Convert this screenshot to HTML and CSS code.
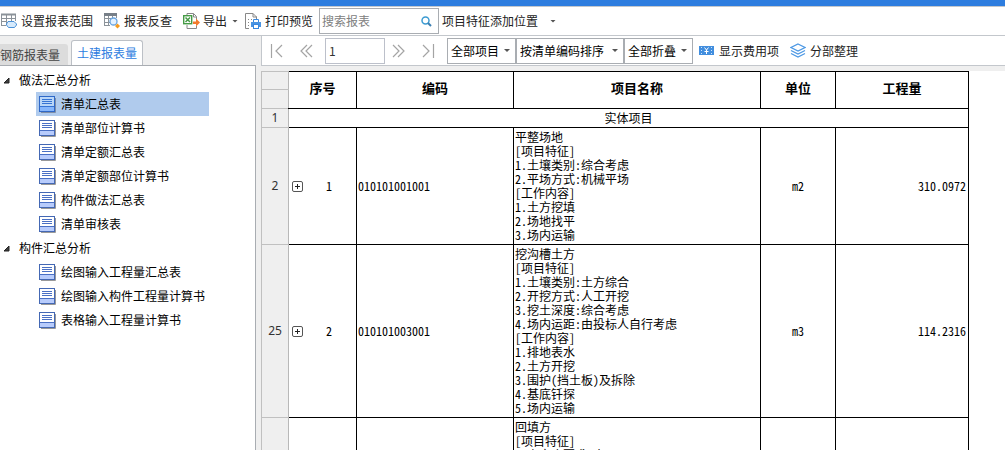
FILE: index.html
```html
<!DOCTYPE html>
<html lang="zh-CN">
<head>
<meta charset="utf-8">
<title>报表</title>
<link rel="stylesheet" href="styles.css">
</head>
<body>
<svg class="defs" aria-hidden="true">
  <symbol id="doc" viewBox="0 0 17 17">
    <path d="M2 16.5H16.5V2" fill="none" stroke="#999"/>
    <rect x=".5" y=".5" width="15" height="15" fill="#fff" stroke="#4468b4"/>
    <rect x="1" y="11" width="14" height="4" fill="#b8ccfc"/>
    <path d="M1 10.5H15M3 3.5H13M3 5.5H13M3 7.5H13" stroke="#4a70c4"/>
  </symbol>
  <symbol id="doc-on" viewBox="0 0 17 17">
    <path d="M2 16.5H16.5V2" fill="none" stroke="#7f8ea6"/>
    <rect x=".5" y=".5" width="15" height="15" fill="#b9d6f8" stroke="#2e68c8"/>
    <rect x="1" y="11" width="14" height="4" fill="#86b6fb"/>
    <path d="M1 10.5H15M3 3.5H13M3 5.5H13M3 7.5H13" stroke="#3674d4"/>
  </symbol>
</svg>
<div class="app">
  <header class="title-strip"></header>
  <div class="toolbar">
    <button class="tool tool-range" type="button">
      <svg class="icon" viewBox="0 0 17 16"><path d="M1.500 1V12M6.500 1V12M11.500 1V8M15.500 1V8M1 5.500H16M1 8.500H7M1 12.500H6" fill="none" stroke="#8b9299"/><path d="M1 1.500H16" stroke="#8b9299" stroke-width="2"/><path d="M8 8.500H14L16.500 11V12L14.500 14.500H8.500L6.500 12V11Z" fill="#d6eafc" stroke="#4b91d8"/></svg>
      设置报表范围</button>
    <button class="tool tool-check" type="button">
      <svg class="icon" viewBox="0 0 17 16"><path d="M.5 1V13M4.500 1V13M8.500 1V5M12.500 1V5M0 5.500H7M0 9.500H6M0 12.500H6" fill="none" stroke="#8b9299"/><path d="M0 1.500H13" stroke="#777f88" stroke-width="3"/><circle cx="9.500" cy="8.500" r="3.500" fill="#e3f1ff" stroke="#6aa5e0" stroke-width="1.300"/><path d="M13.500 10.500L16 13L13.500 15.500L11 13Z" fill="#f49b20"/></svg>
      报表反查</button>
    <button class="tool tool-export" type="button">
      <svg class="icon" viewBox="0 0 17 16"><path d="M4 2V.5H10.500L13.500 3.500V7M10.500.5V4H13.500M4 12V15.500H13.500V13" fill="none" stroke="#888"/><rect x=".7" y="2.700" width="8" height="8" fill="#fff" stroke="#459b45" stroke-width="1.400"/><path d="M2.500 4.500L7 9M7 4.500L2.500 9" stroke="#459b45" stroke-width="1.500"/><path d="M10 8.500H13V5.500L17 9.500L13 13.500V11H10Z" fill="#f37a2c"/></svg>
      导出<span class="arrow"></span></button>
    <button class="tool tool-print" type="button">
      <svg class="icon" viewBox="0 0 17 16"><path d="M4 15.500H.5V.5H8L11.500 4V6M8 .5V4H12" fill="none" stroke="#888"/><path d="M3 6.500H4M3 9.500H4M3 12.500H4M6 6.500H7" stroke="#888"/><path d="M8.500 9V6.500H13.500V9" fill="#fff" stroke="#3988df"/><path d="M6 9H16V14H14V12H8V14H6Z" fill="#4a94e2"/><rect x="8.500" y="11.500" width="5" height="4" fill="#fff" stroke="#3988df"/></svg>
      打印预览</button>
    <label class="search"><input type="text" placeholder="搜索报表" aria-label="搜索报表">
      <svg class="search-icon" viewBox="0 0 11 11"><circle cx="4.500" cy="4.500" r="3.500" fill="none" stroke="#3c9bd2" stroke-width="1.500"/><path d="M7 7L10 10" stroke="#3c7fb2" stroke-width="2"/></svg>
    </label>
    <button class="tool tool-position" type="button">项目特征添加位置<span class="arrow"></span></button>
  </div>
  <div class="body">
    <aside class="sidebar">
      <nav class="tabs">
        <button class="tab" type="button">钢筋报表量</button>
        <button class="tab tab-on" type="button">土建报表量</button>
      </nav>
      <div class="tree">
        <div class="group"><svg class="tri" viewBox="0 0 7 7"><path d="M6 1V6H1Z" fill="#404040" stroke="#222"/></svg>做法汇总分析</div>
        <a class="leaf leaf-on" href="#"><svg class="doc"><use href="#doc-on"/></svg>清单汇总表</a>
        <a class="leaf" href="#"><svg class="doc"><use href="#doc"/></svg>清单部位计算书</a>
        <a class="leaf" href="#"><svg class="doc"><use href="#doc"/></svg>清单定额汇总表</a>
        <a class="leaf" href="#"><svg class="doc"><use href="#doc"/></svg>清单定额部位计算书</a>
        <a class="leaf" href="#"><svg class="doc"><use href="#doc"/></svg>构件做法汇总表</a>
        <a class="leaf" href="#"><svg class="doc"><use href="#doc"/></svg>清单审核表</a>
        <div class="group"><svg class="tri" viewBox="0 0 7 7"><path d="M6 1V6H1Z" fill="#404040" stroke="#222"/></svg>构件汇总分析</div>
        <a class="leaf" href="#"><svg class="doc"><use href="#doc"/></svg>绘图输入工程量汇总表</a>
        <a class="leaf" href="#"><svg class="doc"><use href="#doc"/></svg>绘图输入构件工程量计算书</a>
        <a class="leaf" href="#"><svg class="doc"><use href="#doc"/></svg>表格输入工程量计算书</a>
      </div>
    </aside>
    <main class="report">
      <div class="pager">
        <button class="page-btn" type="button" aria-label="首页"><svg viewBox="0 0 13 14"><path d="M1.500 0V14M12 1L6 7L12 13"/></svg></button>
        <button class="page-btn" type="button" aria-label="上一页"><svg viewBox="0 0 13 14"><path d="M7 1L1 7L7 13M12 1L6 7L12 13"/></svg></button>
        <input class="page-no" type="text" value="1" aria-label="页码">
        <button class="page-btn" type="button" aria-label="下一页"><svg viewBox="0 0 13 14"><path d="M1 1L7 7L1 13M6 1L12 7L6 13"/></svg></button>
        <button class="page-btn" type="button" aria-label="末页"><svg viewBox="0 0 13 14"><path d="M1 1L7 7L1 13M11.500 0V14"/></svg></button>
        <div class="filters">
          <span class="pick pick-s"><select aria-label="项目范围"><option>全部项目</option></select><span class="arrow"></span></span>
          <span class="pick pick-l"><select aria-label="排序"><option>按清单编码排序</option></select><span class="arrow"></span></span>
          <span class="pick pick-s"><select aria-label="折叠"><option>全部折叠</option></select><span class="arrow"></span></span>
        </div>
        <button class="tool tool-fee" type="button">
          <svg class="fee-icon" viewBox="0 0 15 9"><rect width="15" height="9" fill="#428ede"/><path d="M2 1.500H3M2 7.500H3M12 1.500H13M12 7.500H13M2 4.500H3M12 4.500H13" stroke="#cfe4fa"/><path d="M5.500 1.500L7.500 4L9.500 1.500M7.500 4V8M5.500 5.500H9.500" fill="none" stroke="#fff"/></svg>
          显示费用项</button>
        <button class="tool tool-sort" type="button">
          <svg class="layers" viewBox="0 0 16 15"><path d="M8 1L15 4.500L8 8L1 4.500ZM1 7.500L8 11L15 7.500M1 10.500L8 14L15 10.500" fill="none" stroke="#4c98e4" stroke-width="1.300"/></svg>
          分部整理</button>
      </div>
      <div class="sheet">
        <table class="grid">
          <colgroup><col class="c-row"><col class="c-seq"><col class="c-code"><col class="c-name"><col class="c-unit"><col class="c-qty"></colgroup>
          <thead>
            <tr><td class="rownum half"></td><th class="first" rowspan="2">序号</th><th rowspan="2">编码</th><th rowspan="2">项目名称</th><th rowspan="2">单位</th><th rowspan="2">工程量</th></tr>
            <tr><td class="rownum half-low"></td></tr>
          </thead>
          <tbody>
            <tr class="section"><td class="rownum">1</td><td colspan="5">实体项目</td></tr>
            <tr><td class="rownum">2</td>
              <td><div class="seq"><button class="plus" type="button" aria-label="展开"></button><span>1</span></div></td>
              <td>010101001001</td>
              <td>平整场地<br>[项目特征]<br>1.土壤类别:综合考虑<br>2.平场方式:机械平场<br>[工作内容]<br>1.土方挖填<br>2.场地找平<br>3.场内运输</td>
              <td class="mid">m2</td><td class="num">310.0972</td></tr>
            <tr><td class="rownum">25</td>
              <td><div class="seq"><button class="plus" type="button" aria-label="展开"></button><span>2</span></div></td>
              <td>010101003001</td>
              <td>挖沟槽土方<br>[项目特征]<br>1.土壤类别:土方综合<br>2.开挖方式:人工开挖<br>3.挖土深度:综合考虑<br>4.场内运距:由投标人自行考虑<br>[工作内容]<br>1.排地表水<br>2.土方开挖<br>3.围护(挡土板)及拆除<br>4.基底钎探<br>5.场内运输</td>
              <td class="mid">m3</td><td class="num">114.2316</td></tr>
            <tr><td class="rownum"></td><td></td><td></td>
              <td>回填方<br>[项目特征]<br>1.密实度要求:大于</td>
              <td></td><td></td></tr>
          </tbody>
        </table>
      </div>
    </main>
  </div>
</div>
</body>
</html>
```
FILE: styles.css
```css
* { box-sizing: border-box; }
body {
  margin: 0;
  font: 12px/16px "Noto Sans CJK SC", sans-serif;
  color: #000;
  background: #efefef;
}
button, input, select { font: inherit; color: inherit; margin: 0; border-radius: 0; }
svg { display: block; flex: none; }
.defs { position: absolute; width: 0; height: 0; }
.app { display: flex; flex-direction: column; height: 100vh; overflow: hidden; }
.title-strip { flex: none; height: 7px; background: #2d7ddf; border-bottom: 1px solid #c3c7cc; }

.toolbar {
  display: flex;
  align-items: center;
  flex: none;
  height: 29px;
  background: #fff;
  border-bottom: 1px solid #c3c7cc;
}
.tool {
  display: flex;
  align-items: center;
  gap: 4px;
  padding: 0;
  border: 0;
  background: none;
  color: #222;
  white-space: nowrap;
}
.icon { width: 17px; height: 16px; }
.tool-range { width: 104px; }
.tool-check { gap: 3px; width: 79px; }
.tool-export { gap: 3px; width: 62px; }
.tool-print { gap: 3px; width: 74px; }
.arrow {
  flex: none;
  width: 6px;
  height: 3px;
  background: #555;
  clip-path: polygon(0 0, 100% 0, 50% 100%);
}
.tool-export .arrow { margin-left: 2px; }
.search {
  display: flex;
  align-items: center;
  width: 120px;
  height: 26px;
  padding: 0 6px 0 2px;
  border: 1px solid #a9adb2;
  background: #fff;
}
.search input { flex: 1; min-width: 0; padding: 0; border: 0; outline: 0; background: none; }
.search input::placeholder { color: #808080; opacity: 1; }
.search-icon { width: 11px; height: 11px; }
.tool-position { gap: 12px; margin-left: 3px; }

.body { display: flex; flex: 1; min-height: 0; }
.sidebar {
  display: flex;
  flex-direction: column;
  flex: none;
  width: 256px;
}
.tabs { display: flex; align-items: flex-end; flex: none; height: 29px; }
.tab {
  height: 21px;
  width: 68px;
  padding: 0;
  border: 0;
  border-radius: 0 3px 0 0;
  background: #dcdcdc;
  color: #444;
  text-align: left;
  white-space: nowrap;
}
.tab-on {
  height: 25px;
  width: 72px;
  margin-left: 3px;
  text-align: center;
  border: 1px solid #bcc0c6;
  border-bottom: 0;
  border-radius: 3px 3px 0 0;
  background: #fff;
  color: #2d7ddf;
}
.tree {
  flex: 1;
  padding-top: 2px;
  border: solid #a9adb2;
  border-width: 1px 1px 0 0;
  background: #fff;
}
.group { display: flex; align-items: center; gap: 9px; height: 24px; padding-left: 3px; }
.tri { width: 7px; height: 7px; }
.leaf {
  display: flex;
  align-items: center;
  gap: 5px;
  height: 24px;
  margin: 0 46px 0 36px;
  padding-left: 3px;
  color: #000;
  text-decoration: none;
  white-space: nowrap;
}
.leaf-on { background: #b0cbed; }
.doc { width: 17px; height: 17px; }

.report {
  display: flex;
  flex-direction: column;
  flex: 1;
  min-width: 0;
  padding-left: 5px;
}
.pager {
  display: flex;
  align-items: center;
  flex: none;
  height: 30px;
  padding-left: 8px;
  border: solid #c3c7cc;
  border-width: 0 0 1px 1px;
  background: #fff;
}
.page-btn { width: 30px; padding: 0; border: 0; background: none; }
.page-btn svg { width: 13px; height: 14px; fill: none; stroke: #a4a4a4; stroke-width: 1.2; }
.page-no {
  width: 60px;
  height: 26px;
  margin-right: 7px;
  margin-left: -5px;
  padding: 0 3px;
  border: 1px solid #bcc0ca;
  background: #fff;
  color: #333;
}
.filters { display: flex; margin-left: -5px; }
.pick {
  display: flex;
  align-items: center;
  height: 26px;
  padding: 0 5px 0 3px;
  border: 1px solid #a9adb2;
  background: #fff;
}
.pick-s { width: 69px; }
.pick-l { width: 108px; }
.pick select { flex: 1; min-width: 0; padding: 0; border: 0; outline: 0; appearance: none; background: none; }
.tool-fee { gap: 5px; margin-left: 6px; width: 91px; }
.fee-icon { width: 15px; height: 9px; }
.layers { width: 16px; height: 15px; }

.sheet {
  flex: 1;
  min-height: 0;
  overflow: hidden;
  margin-top: 5px;
  background: #fff;
}
.grid {
  table-layout: fixed;
  width: 708px;
  border-collapse: collapse;
  font: 12px/14px "Noto Sans Mono CJK SC", "Noto Sans CJK SC", monospace;
}
.c-row { width: 27px; }
.c-seq { width: 68px; }
.c-code { width: 157px; }
.c-name { width: 247px; }
.c-unit { width: 75px; }
.grid th, .grid td { padding: 2px 1px; border: 1px solid #000; }
.grid th { padding-bottom: 6px; font-size: 13px; font-weight: 700; }
.grid .first { border-left-color: #b8b8b8; }
.grid .rownum {
  padding: 0;
  border-color: #c0c0c0;
  border-right-color: #b8b8b8;
  background: #efefef;
  color: #333;
  font: 12px/16px "Noto Sans", sans-serif;
  text-align: center;
}
.grid .half { height: 18px; }
.grid .half-low { height: 19px; }
.section { height: 19px; text-align: center; }
.mid { text-align: center; }
.grid .num { text-align: right; padding-right: 2px; }
.seq { display: grid; grid-template-columns: 11px 1fr; align-items: center; padding-left: 2px; text-align: center; }
.plus {
  width: 11px;
  height: 11px;
  padding: 0;
  border: 1px solid #555;
  border-radius: 2px;
  background:
    linear-gradient(#222, #222) center / 5px 1px no-repeat,
    linear-gradient(#222, #222) center / 1px 5px no-repeat,
    #fff;
}
```
